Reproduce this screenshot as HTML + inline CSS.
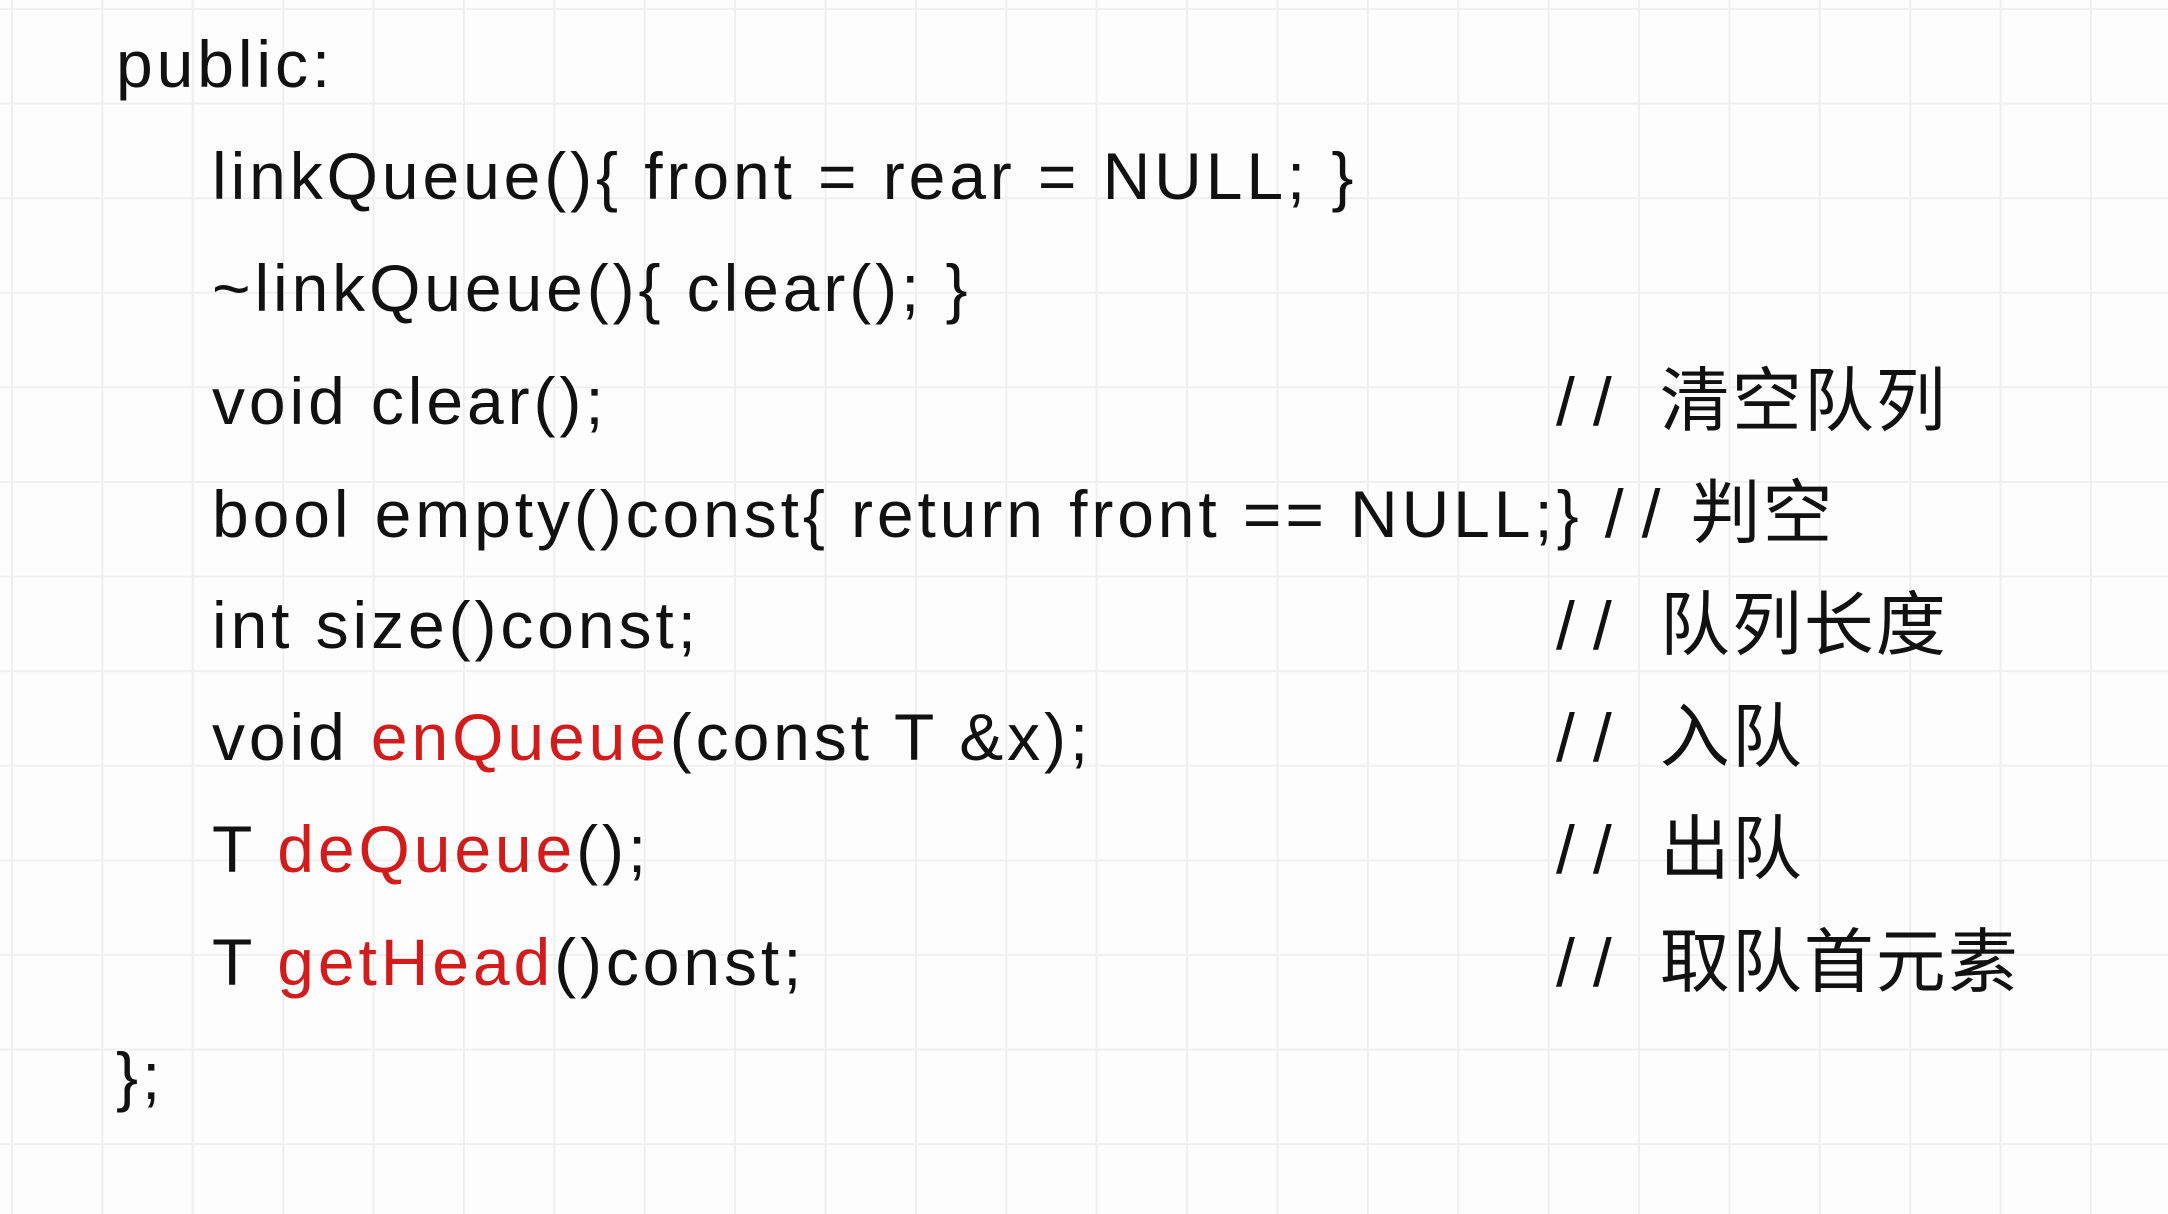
<!DOCTYPE html>
<html><head><meta charset="utf-8"><style>
html,body{margin:0;padding:0}
body{width:2168px;height:1214px;overflow:hidden;position:relative;background-color:#fdfdfd;
background-image:linear-gradient(to right,#efefef 0,#efefef 2px,transparent 2px),linear-gradient(to bottom,#f0f0f0 0,#f0f0f0 2px,transparent 2px);
background-size:90.4px 100%,100% 94.6px;background-position:11px 0,0 8px;
font-family:"Liberation Sans","Noto Sans CJK SC",sans-serif;color:#111;}
.l{position:absolute;left:212px;font-size:66px;line-height:112px;height:112px;white-space:nowrap;letter-spacing:3.9px}
.c{position:absolute;left:1556px;font-size:70px;line-height:112px;white-space:nowrap;letter-spacing:2px}
.s{letter-spacing:18px;margin-right:30px;font-size:68px}
.r{color:#d21c1c}
</style></head><body>
<div class="l" style="left:116px;top:8px">public:</div>
<div class="l" style="top:120px">linkQueue(){ front = rear = NULL; }</div>
<div class="l" style="top:232px">~linkQueue(){ clear(); }</div>
<div class="l" style="top:345px">void clear();</div>
<div class="c" style="top:345px"><span class="s">//</span>清空队列</div>
<div class="l" style="top:457px">bool empty()const{ return front == NULL;}&nbsp;<span style="letter-spacing:18px;font-size:68px">//</span><span style="margin-left:12px;font-size:70px;letter-spacing:2px">判空</span></div>
<div class="l" style="top:569px">int size()const;</div>
<div class="c" style="top:569px"><span class="s">//</span>队列长度</div>
<div class="l" style="top:681px">void <span class="r">enQueue</span>(const T &amp;x);</div>
<div class="c" style="top:681px"><span class="s">//</span>入队</div>
<div class="l" style="top:793px">T <span class="r">deQueue</span>();</div>
<div class="c" style="top:793px"><span class="s">//</span>出队</div>
<div class="l" style="top:906px">T <span class="r">getHead</span>()const;</div>
<div class="c" style="top:906px"><span class="s">//</span>取队首元素</div>
<div class="l" style="left:116px;top:1020px">};</div>
</body></html>
